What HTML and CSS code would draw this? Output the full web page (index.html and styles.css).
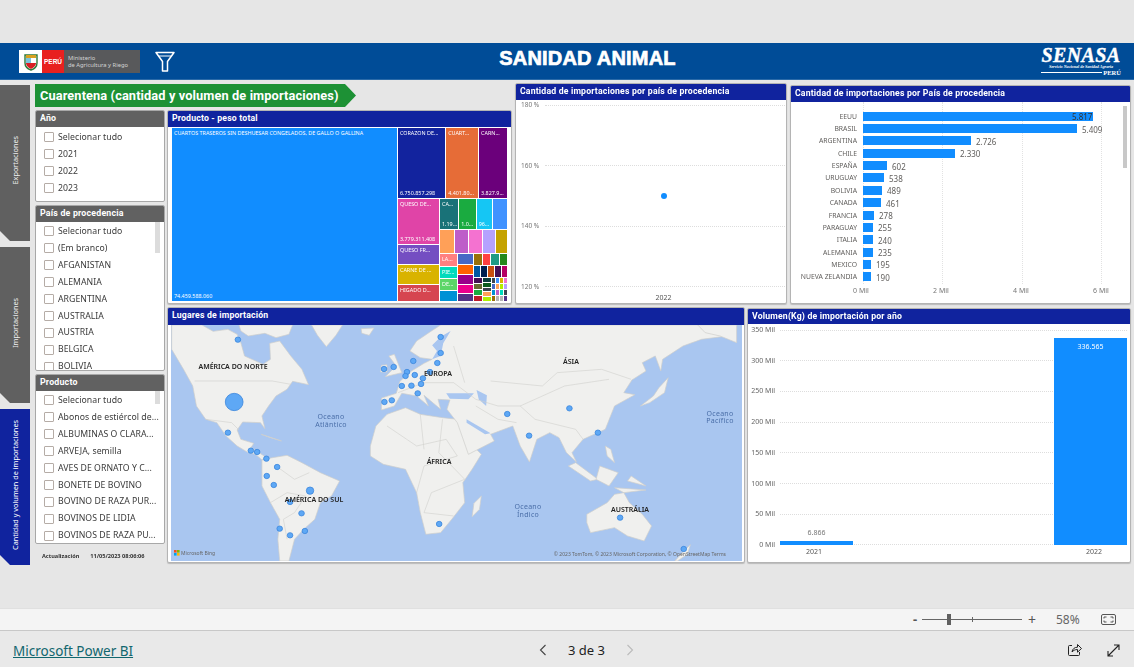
FILE: index.html
```html
<!DOCTYPE html>
<html lang="es">
<head>
<meta charset="utf-8">
<title>Sanidad Animal</title>
<link rel="stylesheet" href="styles.css">
</head>
<body>
<div class="page">
  <header class="banner">
    <div class="minagri">
      <span class="shield"><svg width="16" height="18" viewBox="0 0 16 18"><path d="M2 2h12v8c0 4-3 6-6 7-3-1-6-3-6-7z" fill="#fff" stroke="#2c7a3a" stroke-width="1.4"/><path d="M3 2h10v3H3z" fill="#d8a11f"/><path d="M3 5h5v5H3z" fill="#7cc4dc"/><path d="M8 5h5v5H8z" fill="#fff"/><path d="M3 10h10c0 3-3 5-5 6-2-1-5-3-5-6z" fill="#d81e24"/></svg></span>
      <span class="peru">PERÚ</span>
      <span class="ministry">Ministerio<br>de Agricultura y Riego</span>
    </div>
    <svg class="funnel" width="20" height="22" viewBox="0 0 20 22"><path d="M1 1.500h18l-6.500 9v9.500h-5v-9.500z" fill="none" stroke="#fff" stroke-width="1.500" stroke-linejoin="round"/><path d="M4 5h12" stroke="#fff" stroke-width="1"/></svg>
    <h1 class="banner-title">SANIDAD ANIMAL</h1>
    <div class="senasa">
      <strong class="senasa-name">SENASA</strong>
      <span class="senasa-sub">Servicio Nacional de Sanidad Agraria</span>
      <span class="senasa-peru"><i></i>PERÚ</span>
    </div>
  </header>

  <main class="report">
    <nav class="tabs">
      <div class="tab"><span>Exportaciones</span></div>
      <div class="tab"><span>Importaciones</span></div>
      <div class="tab active"><span>Cantidad y volumen de importaciones</span></div>
    </nav>

    <div class="workspace">
      <div class="page-title">Cuarentena (cantidad y volumen de importaciones)</div>

      <aside class="filters">
        <section class="slicer slicer-year">
          <h2 class="slicer-head">Año</h2>
          <ul class="slicer-list">
            <li><i></i>Selecionar tudo</li><li><i></i>2021</li><li><i></i>2022</li><li><i></i>2023</li>
          </ul>
        </section>
        <section class="slicer slicer-country">
          <h2 class="slicer-head">País de procedencia</h2>
          <ul class="slicer-list with-scroll">
            <li><i></i>Selecionar tudo</li><li><i></i>(Em branco)</li><li><i></i>AFGANISTAN</li><li><i></i>ALEMANIA</li><li><i></i>ARGENTINA</li><li><i></i>AUSTRALIA</li><li><i></i>AUSTRIA</li><li><i></i>BELGICA</li><li><i></i>BOLIVIA</li>
          </ul>
        </section>
        <section class="slicer slicer-product">
          <h2 class="slicer-head">Producto</h2>
          <ul class="slicer-list with-scroll thumb-short">
            <li><i></i>Selecionar tudo</li><li><i></i>Abonos de estiércol de...</li><li><i></i>ALBUMINAS O CLARA...</li><li><i></i>ARVEJA, semilla</li><li><i></i>AVES DE ORNATO Y C...</li><li><i></i>BONETE DE BOVINO</li><li><i></i>BOVINO DE RAZA PUR...</li><li><i></i>BOVINOS DE LIDIA</li><li><i></i>BOVINOS DE RAZA PU...</li>
          </ul>
        </section>
        <div class="updated"><b>Actualización</b><b>11/05/2023 08:06:06</b></div>
      </aside>

      <section class="card treemap-card">
        <h2 class="card-head">Producto - peso total</h2>
        <div class="treemap">
          <div class="tm-cell c-blue tm-big"><span>CUARTOS TRASEROS SIN DESHUESAR CONGELADOS, DE GALLO O GALLINA</span><span>74.459.588.060</span></div>
          <div class="tm-col tm-rest">
            <div class="tm-row tm-h70">
              <div class="tm-cell c-navy" style="flex:148"><span>CORAZON DE...</span><span>6.750.857.298</span></div>
              <div class="tm-cell c-orange" style="flex:96"><span>CUART...</span><span>4.401.80...</span></div>
              <div class="tm-cell c-purple" style="flex:82"><span>CARN...</span><span>3.827.9...</span></div>
            </div>
            <div class="tm-row tm-fill">
              <div class="tm-col tm-w41">
                <div class="tm-cell c-pink" style="flex:143"><span>QUESO DE...</span><span>3.779.311.408</span></div>
                <div class="tm-cell c-violet" style="flex:58"><span>QUESO FR...</span></div>
                <div class="tm-cell c-gold" style="flex:53"><span>CARNE DE ...</span></div>
                <div class="tm-cell c-red" style="flex:45"><span>HIGADO D...</span></div>
              </div>
              <div class="tm-col tm-fill">
                <div class="tm-row" style="flex:90">
                  <div class="tm-cell c-teal" style="flex:58"><span>CA...</span><span>1.19...</span></div>
                  <div class="tm-cell c-green" style="flex:51"><span></span><span>1.0...</span></div>
                  <div class="tm-cell c-sky" style="flex:47"><span></span><span>96...</span></div>
                  <div class="tm-cell c-azure" style="flex:40"></div>
                </div>
                <div class="tm-row" style="flex:69">
                  <div class="tm-cell c-peach" style="flex:44"></div>
                  <div class="tm-cell c-orchid" style="flex:41"></div>
                  <div class="tm-cell c-rose" style="flex:39"></div>
                  <div class="tm-cell c-lilac" style="flex:37"></div>
                  <div class="tm-cell c-mustard" style="flex:32"></div>
                </div>
                <div class="tm-row" style="flex:142">
                  <div class="tm-col" style="flex:53">
                    <div class="tm-cell c-salmon" style="flex:37"><span>LA...</span></div>
                    <div class="tm-cell c-mint" style="flex:33"><span>PIE...</span></div>
                    <div class="tm-cell c-lime" style="flex:35"><span>DE...</span></div>
                    <div class="tm-cell c-ocean" style="flex:28"></div>
                  </div>
                  <div class="tm-col" style="flex:45">
                    <div class="tm-cell c-indigo" style="flex:32"></div>
                    <div class="tm-cell c-tangerine" style="flex:30"></div>
                    <div class="tm-cell c-magenta" style="flex:27"></div>
                    <div class="tm-cell c-fuchsia" style="flex:22"></div>
                    <div class="tm-cell c-grape" style="flex:19"></div>
                  </div>
                  <div class="tm-col" style="flex:101">
                    <div class="tm-row" style="flex:35">
                      <div class="tm-cell c-bronze" style="flex:24"></div>
                      <div class="tm-cell c-scarlet" style="flex:23"></div>
                      <div class="tm-cell c-jade" style="flex:23"></div>
                      <div class="tm-cell c-forest" style="flex:22"></div>
                    </div>
                    <div class="tm-row" style="flex:32">
                      <div class="tm-cell c-cobalt" style="flex:22"></div>
                      <div class="tm-cell c-midnight" style="flex:20"></div>
                      <div class="tm-cell c-rust" style="flex:16"></div>
                      <div class="tm-cell c-plum" style="flex:17"></div>
                      <div class="tm-cell c-berry" style="flex:14"></div>
                    </div>
                    <div class="tm-row" style="flex:69">
                      <div class="tm-col" style="flex:24">
                        <div class="tm-cell c-plum"></div><div class="tm-cell c-olive"></div><div class="tm-cell c-green"></div><div class="tm-cell c-crimson"></div>
                      </div>
                      <div class="tm-col" style="flex:25">
                        <div class="tm-cell c-deep"></div><div class="tm-cell c-pine"></div><div class="tm-cell c-slate"></div><div class="tm-cell c-peach"></div><div class="tm-cell c-acid"></div>
                      </div>
                      <div class="tm-tiny" style="flex:46">
                        <b class="c-slate"></b><b class="c-azure"></b><b class="c-gold"></b><b class="c-rose"></b>
                        <b class="c-indigo"></b><b class="c-peach"></b><b class="c-acid"></b><b class="c-lilac"></b>
                        <b class="c-ocean"></b><b class="c-orchid"></b><b class="c-mint"></b><b class="c-slate"></b>
                        <b class="c-bronze"></b><b class="c-grey"></b><b class="c-grey"></b><b class="c-grape"></b>
                      </div>
                    </div>
                  </div>
                </div>
              </div>
            </div>
          </div>
        </div>
      </section>

      <section class="card scatter-card">
        <h2 class="card-head">Cantidad de importaciones por país de procedencia</h2>
        <div class="scatter">
          <div class="y-row"><span>180 %</span><i></i></div>
          <div class="y-row"><span>160 %</span><i></i></div>
          <div class="y-row"><span>140 %</span><i></i></div>
          <div class="y-row"><span>120 %</span><i></i></div>
          <b class="scatter-dot"></b>
        </div>
        <div class="scatter-x">2022</div>
      </section>

      <section class="card bars-card">
        <h2 class="card-head">Cantidad de importaciones por País de procedencia</h2>
        <div class="hbars">
          <div class="hbar-grid"><i></i><i></i><i></i><i></i></div>
          <div class="hbar"><span>EEUU</span><div class="hbar-track"><b style="width:230px"></b><em class="inside">5.817</em></div></div>
          <div class="hbar"><span>BRASIL</span><div class="hbar-track"><b style="width:214px"></b><em>5.409</em></div></div>
          <div class="hbar"><span>ARGENTINA</span><div class="hbar-track"><b style="width:108px"></b><em>2.726</em></div></div>
          <div class="hbar"><span>CHILE</span><div class="hbar-track"><b style="width:92px"></b><em>2.330</em></div></div>
          <div class="hbar"><span>ESPAÑA</span><div class="hbar-track"><b style="width:24px"></b><em>602</em></div></div>
          <div class="hbar"><span>URUGUAY</span><div class="hbar-track"><b style="width:21px"></b><em>538</em></div></div>
          <div class="hbar"><span>BOLIVIA</span><div class="hbar-track"><b style="width:19px"></b><em>489</em></div></div>
          <div class="hbar"><span>CANADA</span><div class="hbar-track"><b style="width:18px"></b><em>461</em></div></div>
          <div class="hbar"><span>FRANCIA</span><div class="hbar-track"><b style="width:11px"></b><em>278</em></div></div>
          <div class="hbar"><span>PARAGUAY</span><div class="hbar-track"><b style="width:10px"></b><em>255</em></div></div>
          <div class="hbar"><span>ITALIA</span><div class="hbar-track"><b style="width:10px"></b><em>240</em></div></div>
          <div class="hbar"><span>ALEMANIA</span><div class="hbar-track"><b style="width:10px"></b><em>235</em></div></div>
          <div class="hbar"><span>MEXICO</span><div class="hbar-track"><b style="width:8px"></b><em>195</em></div></div>
          <div class="hbar"><span>NUEVA ZELANDIA</span><div class="hbar-track"><b style="width:8px"></b><em>190</em></div></div>
          <b class="hbar-thumb"></b>
        </div>
        <div class="hbar-axis"><span>0 Mil</span><span>2 Mil</span><span>4 Mil</span><span>6 Mil</span></div>
      </section>

      <div class="bottom-row">
        <section class="card map-card">
          <h2 class="card-head">Lugares de importación</h2>
          <svg class="map" width="571" height="236" viewBox="171 324 571 236">
            <rect x="171" y="324" width="571" height="236" class="ocean"/>
            <g transform="translate(165 305) scale(.37 .3333)">
              <g class="land">
                <path d="M18 130V57H100L130 76 170 70 195 85 205 110 215 150 265 175 285 160 283 112 310 105 340 150 370 190 388 236 345 226 330 250 300 270 280 300 262 330 270 368 258 350 210 348 195 372 205 400 240 412 232 425 250 437 275 455 262 462 245 445 225 440 195 420 165 390 140 350 110 340 85 300 75 240 50 190Z"/>
                <path d="M200 57H345L335 85 300 95 270 82 225 90 205 75Z"/>
                <path d="M396 57H480L462 88 436 122 412 88Z"/>
                <path d="M530 68 565 66 552 88 532 82Z"/>
                <path d="M262 462 290 455 330 448 370 470 420 500 472 525 450 570 420 590 405 640 375 670 350 700 335 765H310L305 700 310 640 285 590 262 540 262 500Z"/>
                <path d="M555 420 570 360 600 325 650 305 690 325 750 335 790 340 815 400 855 445 830 490 805 530 810 590 775 640 745 680 705 685 690 620 680 560 650 490 590 475 555 450Z"/>
                <path d="M835 592 855 570 850 610 830 632Z"/>
                <path d="M585 312 585 276 625 262 635 226 665 196 700 172 722 160 690 155 662 135 680 105 720 75 745 57H1545L1520 90 1450 100 1400 120 1345 160 1340 195 1325 150 1290 170 1300 195 1262 222 1240 260 1270 266 1215 300 1190 370 1130 400 1100 440 1112 468 1085 440 1065 395 1040 380 1005 400 985 468 960 420 940 360 880 385 890 405 820 445 790 350 762 310 770 282 738 280 745 310 700 268 712 300 680 270 640 262 620 300Z"/>
                <path d="M1440 57H1545V110L1500 90 1460 80Z"/>
                <path d="M605 150 620 145 640 200 595 212 625 180Z"/>
                <path d="M585 178 600 176 600 198 582 198Z"/>
                <path d="M1335 245 1360 215 1350 260 1310 290 1285 300 1320 270Z"/>
                <path d="M1110 470 1170 520 1150 525 1090 480Z"/>
                <path d="M1175 480 1225 500 1200 540 1165 520Z"/>
                <path d="M1215 545 1300 552 1240 560Z"/>
                <path d="M1260 510 1300 540 1250 525Z"/>
                <path d="M1190 420 1205 430 1215 470 1195 450Z"/>
                <path d="M1140 625 1195 590 1215 565 1240 560 1255 590 1290 625 1315 660 1295 705 1250 690 1215 665 1150 680 1140 650Z"/>
                <path d="M1400 738 1420 716 1412 745 1385 765 1378 765Z"/>
                <path d="M260 385 315 405 285 395Z"/>
              </g>
              <g class="water">
                <path d="M842 252 870 268 868 300 848 280Z"/>
                <path d="M760 262 835 262 820 280 770 278Z"/>
                <path d="M815 340 880 382 865 385 815 350Z"/>
                <path d="M722 118 745 92 772 75 752 112 745 150 722 160 735 135Z"/>
              </g>
              <g class="borders">
                <path d="M80 225H290L340 235"/><path d="M110 340 180 350 200 372"/><path d="M285 590 330 560 380 570 350 620 320 640 330 700"/><path d="M300 480 350 520 390 500"/>
                <path d="M600 360 680 420 760 400 790 450 700 480 680 560"/><path d="M690 325 700 430"/><path d="M750 340 740 440 810 520 720 560 700 620 780 630"/>
                <path d="M630 260 700 230 780 230 840 280 900 300 960 300 1080 240 1200 220"/><path d="M780 120 810 230"/><path d="M880 225 1020 240 1060 200 1180 190 1260 220"/><path d="M960 300 1000 340 1110 370 1130 400"/><path d="M840 300 900 340 950 350"/>
              </g>
              <g class="pins">
                <ellipse cx="197" cy="101" rx="7.600" ry="8"/><ellipse cx="745" cy="93" rx="7.600" ry="8"/><ellipse cx="745" cy="141" rx="7.600" ry="8"/><ellipse cx="671" cy="165" rx="7.600" ry="8"/><ellipse cx="736" cy="171" rx="7.600" ry="8"/><ellipse cx="618" cy="183" rx="7.600" ry="8"/><ellipse cx="592" cy="189" rx="7.600" ry="8"/><ellipse cx="654" cy="198" rx="7.600" ry="8"/><ellipse cx="716" cy="198" rx="7.600" ry="8"/><ellipse cx="650" cy="210" rx="7.600" ry="8"/><ellipse cx="675" cy="207" rx="7.600" ry="8"/><ellipse cx="697" cy="217" rx="7.600" ry="8"/><ellipse cx="692" cy="234" rx="7.600" ry="8"/><ellipse cx="640" cy="240" rx="7.600" ry="8"/><ellipse cx="666" cy="239" rx="7.600" ry="8"/><ellipse cx="683" cy="262" rx="7.600" ry="8"/><ellipse cx="613" cy="283" rx="7.600" ry="8"/><ellipse cx="593" cy="288" rx="7.600" ry="8"/><ellipse cx="187" cy="288" rx="24" ry="26"/><ellipse cx="925" cy="324" rx="7.600" ry="8"/><ellipse cx="1093" cy="307" rx="7.600" ry="8"/><ellipse cx="1170" cy="380" rx="7.600" ry="8"/><ellipse cx="984" cy="389" rx="7.600" ry="8"/><ellipse cx="170" cy="380" rx="7.600" ry="8"/><ellipse cx="232" cy="434" rx="7.600" ry="8"/><ellipse cx="249" cy="438" rx="7.600" ry="8"/><ellipse cx="274" cy="458" rx="7.600" ry="8"/><ellipse cx="303" cy="483" rx="7.600" ry="8"/><ellipse cx="275" cy="510" rx="7.600" ry="8"/><ellipse cx="294" cy="537" rx="7.600" ry="8"/><ellipse cx="392" cy="554" rx="10" ry="11"/><ellipse cx="338" cy="588" rx="7.600" ry="8"/><ellipse cx="369" cy="622" rx="7.600" ry="8"/><ellipse cx="310" cy="668" rx="7.600" ry="8"/><ellipse cx="338" cy="688" rx="7.600" ry="8"/><ellipse cx="378" cy="675" rx="7.600" ry="8"/><ellipse cx="741" cy="654" rx="7.600" ry="8"/><ellipse cx="1230" cy="635" rx="7.600" ry="8"/><ellipse cx="1402" cy="729" rx="7.600" ry="8"/>
              </g>
            </g>
            <g class="continents">
              <text x="233" y="368">AMÉRICA DO NORTE</text><text x="438" y="375">EUROPA</text><text x="571" y="363">ÁSIA</text><text x="439" y="463">ÁFRICA</text><text x="314" y="501">AMÉRICA DO SUL</text><text x="630" y="511">AUSTRÁLIA</text>
            </g>
            <g class="oceans">
              <text x="331" y="418">Oceano</text><text x="331" y="426">Atlântico</text>
              <text x="528" y="508">Oceano</text><text x="528" y="516">Índico</text>
              <text x="720" y="415">Oceano</text><text x="720" y="422">Pacífico</text>
            </g>
            <g>
              <rect x="174" y="549" width="2.600" height="2.600" fill="#f25022"/><rect x="177" y="549" width="2.600" height="2.600" fill="#7fba00"/><rect x="174" y="552" width="2.600" height="2.600" fill="#00a4ef"/><rect x="177" y="552" width="2.600" height="2.600" fill="#ffb900"/>
              <text class="bing" x="181" y="554">Microsoft Bing</text>
              <text class="attrib" x="726" y="555">© 2023 TomTom, © 2023 Microsoft Corporation, © OpenStreetMap  Terms</text>
            </g>
          </svg>
        </section>

        <section class="card volume-card">
          <h2 class="card-head">Volumen(Kg) de importación por año</h2>
          <div class="vchart">
            <div class="vgrid">
              <div class="vline"><span>350 Mil</span><i></i></div>
              <div class="vline"><span>300 Mil</span><i></i></div>
              <div class="vline"><span>250 Mil</span><i></i></div>
              <div class="vline"><span>200 Mil</span><i></i></div>
              <div class="vline"><span>150 Mil</span><i></i></div>
              <div class="vline"><span>100 Mil</span><i></i></div>
              <div class="vline"><span>50 Mil</span><i></i></div>
              <div class="vline"><span>0 Mil</span><i></i></div>
            </div>
            <div class="vbars">
              <div class="vbar"><em>6.866</em><b class="vbar-low"></b></div>
              <div class="vbar"><b class="vbar-high"><em class="inside">336.565</em></b></div>
            </div>
          </div>
          <div class="vaxis"><span>2021</span><span>2022</span></div>
        </section>
      </div>
    </div>
  </main>

  <div class="zoombar">
    <span class="zoom-minus">-</span>
    <span class="zoom-slider"><i class="zoom-tick"></i><i class="zoom-thumb"></i></span>
    <span class="zoom-plus">+</span>
    <span class="zoom-pct">58%</span>
    <svg class="fit" width="15" height="11" viewBox="0 0 15 11"><rect x=".5" y=".5" width="14" height="10" rx="1.500" fill="none" stroke="#555"/><path d="M3 4.500V3h2.500M12 4.500V3H9.500M3 6.500V8h2.500M12 6.500V8H9.500" fill="none" stroke="#555"/></svg>
  </div>

  <footer class="footer">
    <a class="pbi" href="#">Microsoft Power BI</a>
    <div class="pager">
      <svg width="8" height="12" viewBox="0 0 8 12"><path d="M6.500 1 1.500 6l5 5" fill="none" stroke="#444" stroke-width="1.100"/></svg>
      <span>3 de 3</span>
      <svg width="8" height="12" viewBox="0 0 8 12"><path d="M1.500 1l5 5-5 5" fill="none" stroke="#bbb" stroke-width="1.100"/></svg>
    </div>
    <div class="foot-icons">
      <svg width="14" height="14" viewBox="0 0 14 14"><path d="M4 2.500H1.500a1 1 0 0 0-1 1v8a1 1 0 0 0 1 1h9a1 1 0 0 0 1-1V9" fill="none" stroke="#222"/><path d="M4 9c.3-3 2.600-4.800 5.500-4.800V1.500L13.500 5.500 9.500 9.200V6.500C7 6.500 5.300 7.500 4 9z" fill="none" stroke="#222"/></svg>
      <svg width="13" height="13" viewBox="0 0 13 13"><path d="M1 12 12 1M7 1h5v5M1 7v5h5" fill="none" stroke="#222" stroke-width="1.100"/></svg>
    </div>
  </footer>
</div>
</body>
</html>
```
FILE: styles.css
```css
* { box-sizing: border-box; }
html, body { margin: 0; padding: 0; }
body { background: #e6e6e6; font-family: "Noto Sans", "Open Sans", sans-serif; color: #333; overflow: hidden; }
h1, h2, ul { margin: 0; padding: 0; }
.page { width: 1134px; height: 667px; display: flex; flex-direction: column; padding-top: 43px; overflow: hidden; }

/* banner */
.banner { height: 37px; flex: none; background: #004c97; border-bottom: 1px solid #2a6aa8; display: flex; align-items: center; padding: 0 0 0 19px; }
.minagri { display: flex; width: 121px; height: 23px; background: #58595b; margin-top: 1px; flex: none; }
.shield { width: 23px; background: #fff; display: flex; align-items: center; justify-content: center; }
.peru { width: 22px; background: #e8201f; color: #fff; font: 700 6.500px "Liberation Sans", sans-serif; display: flex; align-items: center; justify-content: center; margin-right: 3px; }
.ministry { color: #d4d4d4; font: 5.800px/6.500px "Noto Sans", sans-serif; align-self: center; padding-left: 1px; white-space: nowrap; }
.funnel { margin-left: 15px; margin-top: 2px; flex: none; }
.banner-title { flex: none; width: 825px; text-align: center; color: #fff; font: 700 20px/1 "Liberation Sans", sans-serif; letter-spacing: .2px; -webkit-text-stroke: .7px #fff; margin-top: -6px; }
.senasa { width: 80px; display: flex; flex-direction: column; color: #fff; flex: none; margin-left: 41px; margin-top: 1px; }
.senasa-name { font: italic 700 20px/17px "Liberation Serif", serif; letter-spacing: .4px; text-align: center; -webkit-text-stroke: .4px #fff; }
.senasa-sub { font: italic 700 4.100px/5px "Liberation Serif", serif; white-space: nowrap; text-align: center; }
.senasa-peru { display: flex; align-items: center; font: 700 6.500px/8px "Liberation Serif", serif; justify-content: flex-end; gap: 1px; }
.senasa-peru i { flex: 1; height: 1px; background: #fff; }

/* report */
.report { flex: 1; display: flex; min-height: 0; }
.tabs { width: 30px; flex: none; margin: 5px 5px 0 0; display: flex; flex-direction: column; gap: 6px; }
.tab { height: 156px; flex: none; background: #606060; color: #eee; clip-path: polygon(0 0, 100% 0, 100% 100%, 10px 100%, 0 calc(100% - 10px)); display: flex; align-items: center; justify-content: center; padding-bottom: 5px; font: 7.300px/1 "Noto Sans", sans-serif; }
.tab span { writing-mode: vertical-rl; transform: rotate(180deg); white-space: nowrap; margin-left: 2px; }
.tab.active { background: #10239e; color: #fff; }
.workspace { margin-top: 3px; display: grid; grid-template-columns: 132px 348px 275px 344px; grid-template-rows: 27px 197px 256px; align-content: start; filter: blur(.3px); }
.page-title { grid-column: 1 / 3; width: 321px; height: 23px; margin-top: 1px; background: #1d9135; color: #fff; font: 700 12.800px/23px Roboto, sans-serif; padding-left: 5px; clip-path: polygon(0 0, 310px 0, 100% 50%, 310px 100%, 0 100%); white-space: nowrap; letter-spacing: .1px; }

/* filters */
.filters { grid-column: 1; grid-row: 2 / 4; width: 130px; display: flex; flex-direction: column; gap: 3px; }
.slicer { background: #fff; border: 1px solid #a8a8a8; border-radius: 2px; overflow: hidden; flex: none; display: flex; flex-direction: column; }
.slicer-year { height: 92px; }
.slicer-year .slicer-list { padding-top: 2px; }
.slicer-country { height: 166px; }
.slicer-product { height: 170px; }
.slicer-head { height: 16px; flex: none; background: #616161; color: #fff; font: 700 8.800px/15px Roboto, sans-serif; padding-left: 4px; letter-spacing: .2px; }
.slicer-list { list-style: none; overflow: hidden; position: relative; padding-top: 1px; }
.slicer-list li { height: 16.900px; display: flex; align-items: center; gap: 4px; padding-left: 8px; font-size: 8.700px; line-height: 1; color: #3a3a3a; white-space: nowrap; letter-spacing: .05px; }
.slicer-list li i { width: 10px; height: 10px; border: 1px solid #b5aca6; border-radius: 1px; flex: none; }
.with-scroll::after { content: ""; position: absolute; right: 4px; top: 0; width: 5px; height: 31px; background: #dcdcdc; }
.thumb-short::after { height: 13px; }
.updated { display: flex; gap: 11px; padding: 5px 0 0 7px; font-size: 5.600px; color: #333; white-space: nowrap; }

/* cards */
.card { background: #fff; border: 1px solid #b4b4b4; box-shadow: 0 1px 1px #bbb; border-radius: 2px; overflow: hidden; display: flex; flex-direction: column; }
.card-head { height: 16px; flex: none; background: #10239e; color: #fff; font: 700 8.700px/14px Roboto, sans-serif; padding-left: 4px; white-space: nowrap; letter-spacing: .18px; }

/* treemap */
.treemap-card { grid-column: 2; grid-row: 2; width: 345px; height: 194px; }
.treemap { flex: 1; display: flex; gap: 1px; padding: 1px 4px 2px 4px; min-height: 0; }
.tm-cell { flex: 1; min-width: 0; min-height: 0; overflow: hidden; display: flex; flex-direction: column; justify-content: space-between; padding: 2px 2px 1px; color: #fff; font-size: 5.400px; line-height: 7px; white-space: nowrap; }
.tm-cell.tm-big { width: 225px; flex: none; }
.tm-rest { flex: 1; }
.tm-col { display: flex; flex-direction: column; gap: 1px; min-width: 0; min-height: 0; }
.tm-row { display: flex; gap: 1px; min-width: 0; min-height: 0; }
.tm-h70 { height: 70px; flex: none; }
.tm-fill { flex: 1; }
.tm-w41 { width: 41px; flex: none; }
.tm-tiny { display: grid; grid-template-columns: repeat(4, 1fr); grid-auto-rows: 1fr; gap: 1px; min-width: 0; }
.c-blue { background: #118dff; } .c-navy { background: #12239e; } .c-orange { background: #e66c37; } .c-purple { background: #6b007b; }
.c-pink { background: #e044a7; } .c-violet { background: #744ec2; } .c-gold { background: #d9b300; } .c-red { background: #d64550; }
.c-teal { background: #197278; } .c-green { background: #1aab40; } .c-sky { background: #15c6f4; } .c-azure { background: #4092ff; }
.c-peach { background: #ffa058; } .c-orchid { background: #be5dc9; } .c-rose { background: #f472d0; } .c-lilac { background: #b5a1ff; } .c-mustard { background: #c4a200; }
.c-salmon { background: #ff8080; } .c-mint { background: #00dbbc; } .c-lime { background: #5bd667; } .c-ocean { background: #0091d5; }
.c-indigo { background: #4668c5; } .c-tangerine { background: #ff6300; } .c-magenta { background: #99008a; } .c-fuchsia { background: #ec008c; } .c-grape { background: #533285; }
.c-bronze { background: #99700a; } .c-scarlet { background: #ff4141; } .c-jade { background: #1f9a85; } .c-forest { background: #25891c; }
.c-cobalt { background: #0057a2; } .c-midnight { background: #002050; } .c-rust { background: #c94f0f; } .c-plum { background: #450f54; } .c-berry { background: #b60064; }
.c-olive { background: #6a6a33; } .c-crimson { background: #bf1a2b; } .c-deep { background: #0e3f3f; } .c-pine { background: #0d5c1f; } .c-slate { background: #3d4450; } .c-acid { background: #b0f000; } .c-grey { background: #b5b5b5; }

/* scatter */
.scatter-card { grid-column: 3; grid-row: 1 / 3; width: 272px; height: 221px; }
.scatter { position: relative; height: 192px; padding: 0 1px 0 5px; display: flex; flex-direction: column; justify-content: space-between; margin-top: 0; }
.y-row { display: flex; align-items: center; gap: 5px; font-size: 6.500px; line-height: 10px; color: #777; }
.y-row span { width: 19px; flex: none; }
.y-row i { flex: 1; border-top: 1px dotted #ddd; }
.scatter-dot { position: absolute; left: 145px; top: 93px; width: 6px; height: 6px; border-radius: 50%; background: #118dff; }
.scatter-x { text-align: center; font-size: 7px; line-height: 10px; color: #555; padding-left: 25px; margin-top: 1px; }

/* horizontal bars */
.bars-card { grid-column: 4; grid-row: 1 / 3; width: 341px; height: 219px; margin-top: 2px; }
.hbars { position: relative; padding-top: 8px; flex: none; height: 182px; }
.hbar { height: 12.370px; display: flex; align-items: center; font-size: 6.800px; line-height: 9px; color: #605e5c; }
.hbar > span { width: 66px; flex: none; text-align: right; white-space: nowrap; margin-right: 6px; }
.hbar-track { display: flex; align-items: center; position: relative; flex: 1; }
.hbar-track b { height: 9px; background: #118dff; flex: none; display: block; }
.hbar-track em { font-style: normal; font-size: 8px; margin-left: 5px; padding-top: 1px; color: #605e5c; }
.hbar-track em.inside { margin-left: -21px; color: #333; }
.hbar-grid { position: absolute; left: 72px; top: 0; width: 239px; height: 100%; display: flex; justify-content: space-between; }
.hbar-grid i { border-left: 1px dotted #e2e2e2; }
.hbar-thumb { position: absolute; right: 3px; top: 4px; width: 4px; height: 62px; background: #c8c8c8; }
.hbar-axis { display: flex; justify-content: space-between; width: 280px; margin-left: 50px; font-size: 7px; line-height: 10px; color: #777; padding-top: 2px; }
.hbar-axis span { width: 40px; text-align: center; }

/* bottom */
.bottom-row { grid-column: 2 / 5; grid-row: 3; display: flex; gap: 2px; }
.map-card { width: 578px; height: 256px; }
.map-card .card-head { height: 17px; }
.map { display: block; margin-left: 3px; flex: none; }
.ocean { fill: #a9c6f0; }
.land path { fill: #f0f0ee; stroke: #cfcfcb; stroke-width: .7; vector-effect: non-scaling-stroke; }
.water path { fill: #a9c6f0; }
.borders path { fill: none; stroke: #d0d0cc; stroke-width: .6; vector-effect: non-scaling-stroke; }
.pins ellipse { fill: #5ea8f5; stroke: #3c86dc; stroke-width: .8; vector-effect: non-scaling-stroke; }
.continents text { font: 600 7px "Noto Sans", sans-serif; fill: #222; text-anchor: middle; }
.oceans text { font: 7px "Noto Sans", sans-serif; fill: #4a6ea8; text-anchor: middle; letter-spacing: .3px; }
.bing { font: 5px "Noto Sans", sans-serif; fill: #666; }
.attrib { font: 5px "Noto Sans", sans-serif; fill: #666; text-anchor: end; }

.volume-card { width: 384px; height: 255px; margin-top: 1px; }
.volume-card .card-head { height: 15px; }
.vchart { position: relative; height: 226px; }
.vgrid { position: absolute; left: 0; right: 3px; top: 0; bottom: 0; padding-top: 1px; display: flex; flex-direction: column; justify-content: space-between; }
.vline { display: flex; align-items: center; gap: 5px; font-size: 7px; line-height: 10px; color: #666; }
.vline span { width: 27px; text-align: right; flex: none; }
.vline i { flex: 1; border-top: 1px dotted #ddd; }
.vbars { position: absolute; left: 32px; right: 3px; bottom: 5px; height: 215px; display: flex; justify-content: space-between; align-items: flex-end; }
.vbar { width: 73px; display: flex; flex-direction: column; align-items: center; font-size: 7px; color: #777; }
.vbar em { font-style: normal; line-height: 10px; margin-bottom: 3px; }
.vbar b { display: block; width: 100%; background: #118dff; font-weight: 400; text-align: center; }
.vbar-low { height: 4px; }
.vbar-high { height: 207px; }
.vbar em.inside { display: block; color: #fff; padding-top: 4px; }
.vaxis { display: flex; justify-content: space-between; padding: 0 28px 0 58px; margin-top: -3px; font-size: 7px; line-height: 10px; color: #555; }

/* zoom bar and footer */
.zoombar { height: 23px; flex: none; background: #f4f4f4; border-top: 1px solid #e0e0e0; border-bottom: 1px solid #c8c8c8; display: flex; align-items: center; padding-left: 913px; color: #555; }
.zoom-minus { width: 9px; font: 700 13px/1 "Noto Sans", sans-serif; }
.zoom-slider { width: 100px; height: 1px; background: #666; position: relative; }
.zoom-thumb { position: absolute; left: 25px; top: -5px; width: 4px; height: 11px; background: #606060; }
.zoom-tick { position: absolute; left: 50px; top: -2px; width: 1px; height: 5px; background: #666; }
.zoom-plus { margin-left: 6px; width: 28px; font: 14px/1 "Noto Sans", sans-serif; color: #555; }
.zoom-pct { width: 45px; font-size: 12px; color: #666; }
.footer { height: 36px; flex: none; background: #e9e9e9; display: flex; align-items: center; padding: 2px 0 0 13px; }
.pbi { color: #11666e; font-size: 13.500px; width: 526px; flex: none; margin-top: 2px; }
.pager { display: flex; align-items: center; gap: 21px; width: 525px; color: #222; font-size: 13px; flex: none; }
.foot-icons { display: flex; gap: 25px; align-items: center; margin-left: 4px; }
```
